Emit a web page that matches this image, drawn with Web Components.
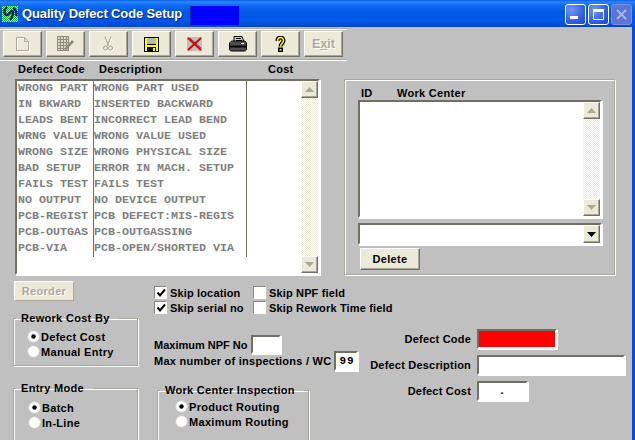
<!DOCTYPE html>
<html>
<head>
<meta charset="utf-8">
<title>Quality Defect Code Setup</title>
<style>
    html, body { margin: 0; padding: 0; overflow: hidden; }
    body { width: 635px; height: 440px; font: bold 11px "Liberation Sans", Arial, sans-serif; color: #000; }
</style>
</head>
<body>
<xp-window caption="Quality Defect Code Setup">
    <xp-toolbar>
        <tool-button><svg width="14" height="15" viewBox="0 0 14 15"><path d="M.5.500h8l4 4v9H.5z" fill="none" stroke="#fff" transform="translate(1 1)"/><path d="M.5.500h8l4 4v9H.5zM8.500.5v4h4" fill="none" stroke="#aca899"/></svg></tool-button>
        <tool-button><svg width="17" height="16" viewBox="0 0 17 16" shape-rendering="crispEdges"><rect x=".5" y=".5" width="11" height="14" fill="#dcd9ca" stroke="#8f8c7e"/><path d="M1 3.500h10M1 6.500h10M1 9.500h10M1 12.500h10M3.500 1v13M6.500 1v13M9.500 1v13" stroke="#8f8c7e" fill="none"/><path d="M7 15l2-5 6-6 2 2-6 6z" fill="#8f8c7e" shape-rendering="auto"/></svg></tool-button>
        <tool-button><svg width="11" height="16" viewBox="0 0 11 16"><g fill="none" stroke="#fff" transform="translate(1 1)"><path d="M2 .5l3.500 9M8 .5l-3.500 9"/><circle cx="2.500" cy="12" r="2"/><circle cx="7.500" cy="12" r="2"/></g><g fill="none" stroke="#a09d8e"><path d="M2 .5l3.500 9M8 .5l-3.500 9"/><circle cx="2.500" cy="12" r="2"/><circle cx="7.500" cy="12" r="2"/></g></svg></tool-button>
        <tool-button><svg width="15" height="15" viewBox="0 0 15 15" shape-rendering="crispEdges"><rect width="15" height="15" fill="#000"/><rect x="1" y="1" width="13" height="13" fill="#ffff00"/><rect x="3" y="1" width="9" height="6" fill="#b8b8b8"/><rect x="3" y="7" width="9" height="1" fill="#000"/><rect x="3" y="10" width="9" height="5" fill="#000"/><rect x="9" y="11" width="2" height="3" fill="#ffff00"/></svg></tool-button>
        <tool-button><svg width="15" height="14" viewBox="0 0 15 14"><rect width="15" height="14" fill="#c0c0c0"/><path d="M1 1l13 12M14 1L1 13" stroke="#e00000" stroke-width="2"/><path d="M3 1l11 10" stroke="#800000" stroke-width=".6"/></svg></tool-button>
        <tool-button><svg width="18" height="16" viewBox="0 0 18 16"><path d="M5 .5h8l2 5H5z" fill="#d0d0d0" stroke="#000"/><path d="M7 2.500h5M7 4.500h6" stroke="#000"/><path d="M.5 8c0-2 2-3 3-3h11c2 0 3 1 3 3v5c0 1-1 2-2 2H2.500c-1 0-2-1-2-2z" fill="#505050" stroke="#000"/><path d="M1 10.500h16" stroke="#000" stroke-width="2"/><path d="M12 7.500h3" stroke="#fff"/></svg></tool-button>
        <tool-button><svg width="11" height="16" viewBox="0 0 11 16"><path d="M2.500 5C2.500.5 8.500.5 8.500 4.500c0 3-3 3-3 6" fill="none" stroke="#000" stroke-width="4"/><rect x="3" y="11.500" width="5" height="4.500" fill="#000"/><path d="M2.500 5C2.500.5 8.500.5 8.500 4.500c0 3-3 3-3 6" fill="none" stroke="#ffff00" stroke-width="1.600"/><rect x="4.500" y="13" width="2" height="1.500" fill="#ffff00"/></svg></tool-button>
        <tool-button class="text-tool"><span class="exit">E<u>x</u>it</span></tool-button>
    </xp-toolbar>

    <div class="top">
        <defect-list></defect-list>
        <center-panel></center-panel>
    </div>

    <div class="lower">
        <div class="left-col">
            <win-button disabled style="width:60px;height:20px;margin-left:1px">Reorder</win-button>
            <group-box caption="Rework Cost By" style="margin-top:11px;height:54px;--inset:13px;--top:4px">
                <radio-option checked>Defect Cost</radio-option>
                <radio-option>Manual Entry</radio-option>
            </group-box>
            <group-box caption="Entry Mode" style="margin-top:16px;height:70px;--inset:14px;--top:5px">
                <radio-option checked>Batch</radio-option>
                <radio-option>In-Line</radio-option>
            </group-box>
        </div>
        <div class="right-col">
            <div class="checks">
                <check-option checked>Skip location</check-option>
                <check-option>Skip NPF field</check-option>
                <check-option checked>Skip serial no</check-option>
                <check-option>Skip Rework Time field</check-option>
            </div>
            <div class="bottom">
                <div class="limits">
                    <div class="limit npf"><span>Maximum NPF No</span><text-field style="width:30px;height:19px"></text-field></div>
                    <div class="limit wc"><span>Max number of inspections / WC</span><text-field style="width:24px;height:20px" mono>99</text-field></div>
                    <group-box caption="Work Center Inspection" style="margin:13px 0 0 3px;width:152px;height:70px;--inset:17px;--top:2px">
                        <radio-option checked>Product Routing</radio-option>
                        <radio-option>Maximum Routing</radio-option>
                    </group-box>
                </div>
                <div class="fields">
                    <span>Defect Code</span><text-field style="width:80px;height:20px;--field-bg:#ff0000"></text-field>
                    <span>Defect Description</span><text-field style="width:148px;height:20px"></text-field>
                    <span>Defect Cost</span><text-field style="width:51px;height:20px" center mono>.</text-field>
                </div>
            </div>
        </div>
    </div>
</xp-window>

<style>
    .top { display: flex; align-items: flex-end; gap: 24px; margin: 4px 0 0 15px; }
    .lower { display: flex; margin-left: 13px; }
    .left-col { width: 125px; padding-top: 6px; flex: none; }
    .right-col { margin-left: 16px; flex: none; width: 478px; }
    .checks { display: grid; grid-template-columns: 99px 200px; grid-auto-rows: 15px; padding-top: 10px; }
    .bottom { display: flex; margin-top: 8px; }
    .limits { width: 216px; padding-top: 12px; flex: none; }
    .limit { display: flex; align-items: center; gap: 3px; white-space: nowrap; }
    .limit.wc { margin-top: -3px; letter-spacing: .25px; }
    .fields { display: grid; grid-template-columns: 101px auto; grid-auto-rows: 20px; row-gap: 6px; column-gap: 6px; align-items: center; justify-items: start; padding-top: 6px; letter-spacing: .2px; }
    .fields span { justify-self: end; white-space: nowrap; }
</style>

<script>
const bevel = `
    border: 1px solid; border-color: #fff #716f64 #716f64 #fff;
    box-shadow: inset -1px -1px 0 #aca899;
    background: #ece9d8;
    box-sizing: border-box;`;
const sunken = `
    border: 2px solid; border-color: #716f64 #fff #fff #716f64;
    box-shadow: 1px 1px 0 #fff;
    box-sizing: border-box;`;

function shadow(el, html) {
    el.attachShadow({mode: 'open'});
    el.shadowRoot.innerHTML = html;
}

customElements.define('xp-window', class extends HTMLElement {
    connectedCallback() {
        shadow(this, `
        <style>
            :host { display: flex; flex-direction: column; width: 635px; height: 440px; overflow: hidden; background: #c0c0c0; }
            .bar { height: 27px; flex: none; display: flex; align-items: center; color: #fff;
                background: linear-gradient(180deg, #0a5fe6 0, #2a86fb 2px, #0f6cf3 5px, #0057e5 12px, #0058e8 20px, #0050d8 25px, #0040b8 27px); }
            .logo { width: 16px; height: 16px; margin: 1px 4px 0 2px; flex: none; background: repeating-conic-gradient(#f0f000 0 25%, #10b020 0 50%) 0 0 / 2px 2px; }
            .title { font: bold 13px "Liberation Sans", Arial, sans-serif; letter-spacing: -.13px; width: 168px; white-space: nowrap; text-shadow: 1px 1px 0 #0f1f70; flex: none; }
            .chip { width: 49px; height: 19px; margin-top: 4px; background: #0000ff; border-left: 1px solid #0030a0; box-sizing: border-box; flex: none; }
            .caps { margin-left: auto; display: flex; gap: 2px; padding: 2px 3px 0 0; }
            .cap { width: 21px; height: 21px; border: 1px solid #fff; border-radius: 3px; box-sizing: border-box;
                background: radial-gradient(circle at 30% 25%, #6f96f5, #2a58de 70%, #1c46c8); display: flex; }
            .cap.off { background: #5a74d8; border-color: #7e90dc; }
            .body { flex: 1; display: flex; min-height: 0; }
            .main { flex: 1; min-width: 0; }
            .edge { width: 3px; flex: none; background: #0a49d8; }
        </style>
        <div class="bar">
            <svg class="logo" viewBox="0 0 16 16"><path d="M5 1C1 4 2 9 5 9c2 0 3-4 5-4s1 6-2 9M11 2c3 1 4 5 3 8" fill="none" stroke="#0a2070" stroke-width="2.500"/></svg>
            <span class="title">${this.getAttribute('caption')}</span>
            <span class="chip"></span>
            <span class="caps">
                <span class="cap"><svg width="19" height="19"><rect x="4" y="11" width="8" height="3" fill="#fff"/></svg></span>
                <span class="cap"><svg width="19" height="19"><path d="M4.500 4.500h10v10h-10z" fill="none" stroke="#fff"/><rect x="4" y="4" width="11" height="3" fill="#fff"/></svg></span>
                <span class="cap off"><svg width="19" height="19"><path d="M5 5l9 9M14 5l-9 9" stroke="#a9b6e8" stroke-width="2"/></svg></span>
            </span>
        </div>
        <div class="body"><div class="main"><slot></slot></div><div class="edge"></div></div>`);
    }
});

customElements.define('xp-toolbar', class extends HTMLElement {
    constructor() {
        super();
        shadow(this, `
        <style>
            :host { display: flex; gap: 4px; width: 347px; height: 31px; margin-top: 2px; padding: 1px 0 0 3px; box-sizing: border-box;
                border-top: 1px solid #fff; border-bottom: 1px solid #aca899; box-shadow: 0 1px 0 #fff, 0 -1px 0 #aca899; }
        </style><slot></slot>`);
    }
});

customElements.define('tool-button', class extends HTMLElement {
    constructor() {
        super();
        shadow(this, `
        <style>
            :host { display: flex; align-items: center; justify-content: center; width: 39px; height: 26px; ${bevel} }
            ::slotted(.exit) { color: #aca899; font: bold 12.5px "Liberation Sans", Arial, sans-serif; text-shadow: 1px 1px 0 #fff; }
        </style><slot></slot>`);
    }
});

customElements.define('win-button', class extends HTMLElement {
    constructor() {
        super();
        shadow(this, `
        <style>
            :host { display: flex; align-items: center; justify-content: center; letter-spacing: .3px; ${bevel} }
            :host([disabled]) { color: #aca899; text-shadow: 1px 1px 0 #fff; border-color: #fff #aca899 #aca899 #fff; box-shadow: none; }
        </style><slot></slot>`);
    }
});

customElements.define('scroll-bar', class extends HTMLElement {
    constructor() {
        super();
        const arrow = (up, color) => `<svg width="9" height="5" viewBox="0 0 9 5"><path d="${up ? 'M4.500 0L9 5H0z' : 'M0 0h9L4.500 5z'}" fill="${color}"/></svg>`;
        const color = this.hasAttribute('live') ? '#000' : '#aca899';
        shadow(this, `
        <style>
            :host { display: flex; flex-direction: column; justify-content: space-between; width: 17px; flex: none;
                background: repeating-conic-gradient(#fff 0 25%, #ece9d8 0 50%) 0 0 / 2px 2px; }
            .btn { height: 17px; display: flex; align-items: center; justify-content: center; ${bevel} }
        </style>
        <div class="btn">${arrow(true, color)}</div><div class="btn">${arrow(false, color)}</div>`);
    }
});

const ROWS = [
    ['WRONG PART', 'WRONG PART USED'],
    ['IN BKWARD', 'INSERTED BACKWARD'],
    ['LEADS BENT', 'INCORRECT LEAD BEND'],
    ['WRNG VALUE', 'WRONG VALUE USED'],
    ['WRONG SIZE', 'WRONG PHYSICAL SIZE'],
    ['BAD SETUP', 'ERROR IN MACH. SETUP'],
    ['FAILS TEST', 'FAILS TEST'],
    ['NO OUTPUT', 'NO DEVICE OUTPUT'],
    ['PCB-REGIST', 'PCB DEFECT:MIS-REGIS'],
    ['PCB-OUTGAS', 'PCB-OUTGASSING'],
    ['PCB-VIA', 'PCB-OPEN/SHORTED VIA'],
];

customElements.define('defect-list', class extends HTMLElement {
    constructor() {
        super();
        const rows = ROWS.map(r => `<div class="row"><span>${r[0]}</span><span>${r[1]}</span><span></span></div>`).join('');
        shadow(this, `
        <style>
            :host { display: block; width: 305px; }
            .head { display: grid; grid-template-columns: 81px 169px auto; height: 15px; line-height: 10px; padding-left: 3px; letter-spacing: .25px; }
            .box { display: flex; height: 196px; ${sunken} background: #fff; }
            .rows { flex: 1; font: bold 11.67px/15px "Liberation Mono", "Courier New", monospace; color: #808080; }
            .row { display: grid; grid-template-columns: 77px 153px 1fr; height: 16px; white-space: nowrap; }
            .row span { padding-left: 1px; border-right: 1px solid #716f64; overflow: hidden; }
            .row span:nth-child(2) { padding-left: 0; }
            .row span:last-child { border: 0; }
        </style>
        <div class="head"><span>Defect Code</span><span>Description</span><span>Cost</span></div>
        <div class="box"><div class="rows">${rows}</div><scroll-bar></scroll-bar></div>`);
    }
});

customElements.define('center-panel', class extends HTMLElement {
    constructor() {
        super();
        shadow(this, `
        <style>
            :host { display: block; width: 271px; height: 196px; box-sizing: border-box; padding: 6px 0 0 13px;
                border: 1px solid #aca899; box-shadow: inset 1px 1px 0 #fff, 1px 1px 0 #fff; }
            .head { display: grid; grid-template-columns: 36px auto; height: 14px; line-height: 14px; padding-left: 3px; letter-spacing: .3px; }
            .list { width: 244px; height: 118px; display: flex; background: #fff; ${sunken} }
            .list div { flex: 1; }
            .combo { width: 244px; height: 22px; margin-top: 5px; display: flex; justify-content: flex-end; background: #fff; ${sunken} }
            .drop { width: 17px; display: flex; align-items: center; justify-content: center; ${bevel} }
            win-button { width: 60px; height: 22px; margin: 3px 0 0 2px; }
        </style>
        <div class="head"><span>ID</span><span>Work Center</span></div>
        <div class="list"><div></div><scroll-bar></scroll-bar></div>
        <div class="combo"><div class="drop"><svg width="9" height="5"><path d="M0 0h9L4.500 5z"/></svg></div></div>
        <win-button>Delete</win-button>`);
    }
});

customElements.define('group-box', class extends HTMLElement {
    connectedCallback() {
        shadow(this, `
        <style>
            :host { display: block; box-sizing: border-box; width: 125px; }
            fieldset { margin: 0; padding: 0; height: 100%; box-sizing: border-box; min-width: 0;
                border: 1px solid #aca899; box-shadow: inset 1px 1px 0 #fff, 1px 1px 0 #fff; }
            legend { padding: 0 9px 0 5px; margin-left: 2px; line-height: 13px; letter-spacing: .3px; white-space: nowrap; }
            .items { display: grid; grid-auto-rows: 15px; padding: var(--top, 1px) 0 0 var(--inset, 13px); }
        </style>
        <fieldset><legend>${this.getAttribute('caption')}</legend><div class="items"><slot></slot></div></fieldset>`);
    }
});

customElements.define('radio-option', class extends HTMLElement {
    constructor() {
        super();
        const dot = this.hasAttribute('checked') ? '<circle cx="6.500" cy="6.500" r="2.200" fill="#000"/>' : '';
        shadow(this, `
        <style>
            :host { display: flex; align-items: center; gap: 1px; white-space: nowrap; letter-spacing: .3px; }
            svg { flex: none; }
        </style>
        <svg width="13" height="13" viewBox="0 0 13 13"><circle cx="6.500" cy="6.500" r="5.800" fill="#fff" stroke="#d4d0c8"/>${dot}</svg><span><slot></slot></span>`);
    }
});

customElements.define('check-option', class extends HTMLElement {
    constructor() {
        super();
        const tick = this.hasAttribute('checked') ? '<path d="M2.500 5.500l2.500 3 5-6" fill="none" stroke="#000" stroke-width="2"/>' : '';
        shadow(this, `
        <style>
            :host { display: flex; align-items: center; gap: 3px; white-space: nowrap; letter-spacing: .15px; }
            svg { flex: none; background: #fff; border: 1px solid; border-color: #8a8778 #fff #fff #8a8778; }
        </style>
        <svg width="11" height="11" viewBox="0 0 11 11">${tick}</svg><span><slot></slot></span>`);
    }
});

customElements.define('text-field', class extends HTMLElement {
    constructor() {
        super();
        shadow(this, `
        <style>
            :host { display: flex; align-items: center; padding-left: 3px; flex: none; background: var(--field-bg, #fff); ${sunken} }
            :host([mono]) { font: bold 11px "Liberation Mono", monospace; letter-spacing: 1px; }
            :host([center]) { justify-content: center; padding-left: 0; }
        </style><slot></slot>`);
    }
});
</script>
</body>
</html>
